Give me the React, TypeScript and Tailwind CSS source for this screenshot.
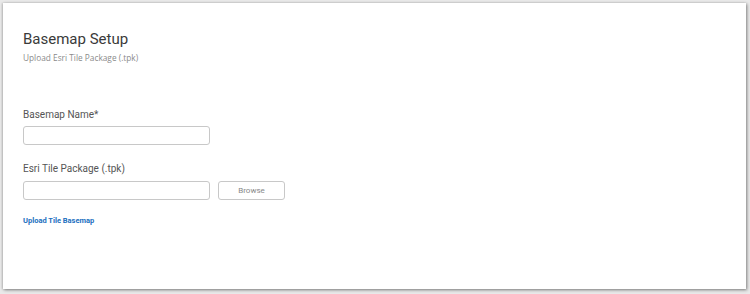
export default function App() {
  return (
    <div className="w-[750px] h-[294px] bg-[#e9e9e9] pt-[3px] pl-[3px] font-['Roboto',sans-serif]">
      <div className="w-[743px] h-[286px] bg-white shadow-[1px_1px_3px_rgba(0,0,0,0.45),-1px_0_2px_rgba(0,0,0,0.15)] px-[20px] pt-[27px]">
        <h1 className="text-[15px] leading-[18px] text-[#3a3a3a]">Basemap Setup</h1>
        <p className="mt-[4px] text-[8.3px] leading-[12px] text-[#8a8a8a] font-['Open_Sans',sans-serif]">Upload Esri Tile Package (.tpk)</p>

        <div className="mt-[45px] flex flex-col">
          <label className="text-[10px] leading-[12px] text-[#555]">Basemap Name*</label>
          <input className="mt-[5px] w-[187px] h-[19px] border border-[#c8c8c8] rounded-[3px] outline-none" />
        </div>

        <div className="mt-[18px] flex flex-col">
          <label className="text-[10px] leading-[12px] text-[#555]">Esri Tile Package (.tpk)</label>
          <div className="mt-[6px] flex gap-[8px]">
            <input className="w-[187px] h-[19px] border border-[#c8c8c8] rounded-[3px] outline-none" />
            <button className="w-[67px] h-[19px] border border-[#c8c8c8] rounded-[3px] text-[8px] text-[#888]">Browse</button>
          </div>
        </div>

        <a className="mt-[16px] block text-[7.5px] leading-[10px] font-bold text-[#1a6fc0]">Upload Tile Basemap</a>
      </div>
    </div>
  );
}
